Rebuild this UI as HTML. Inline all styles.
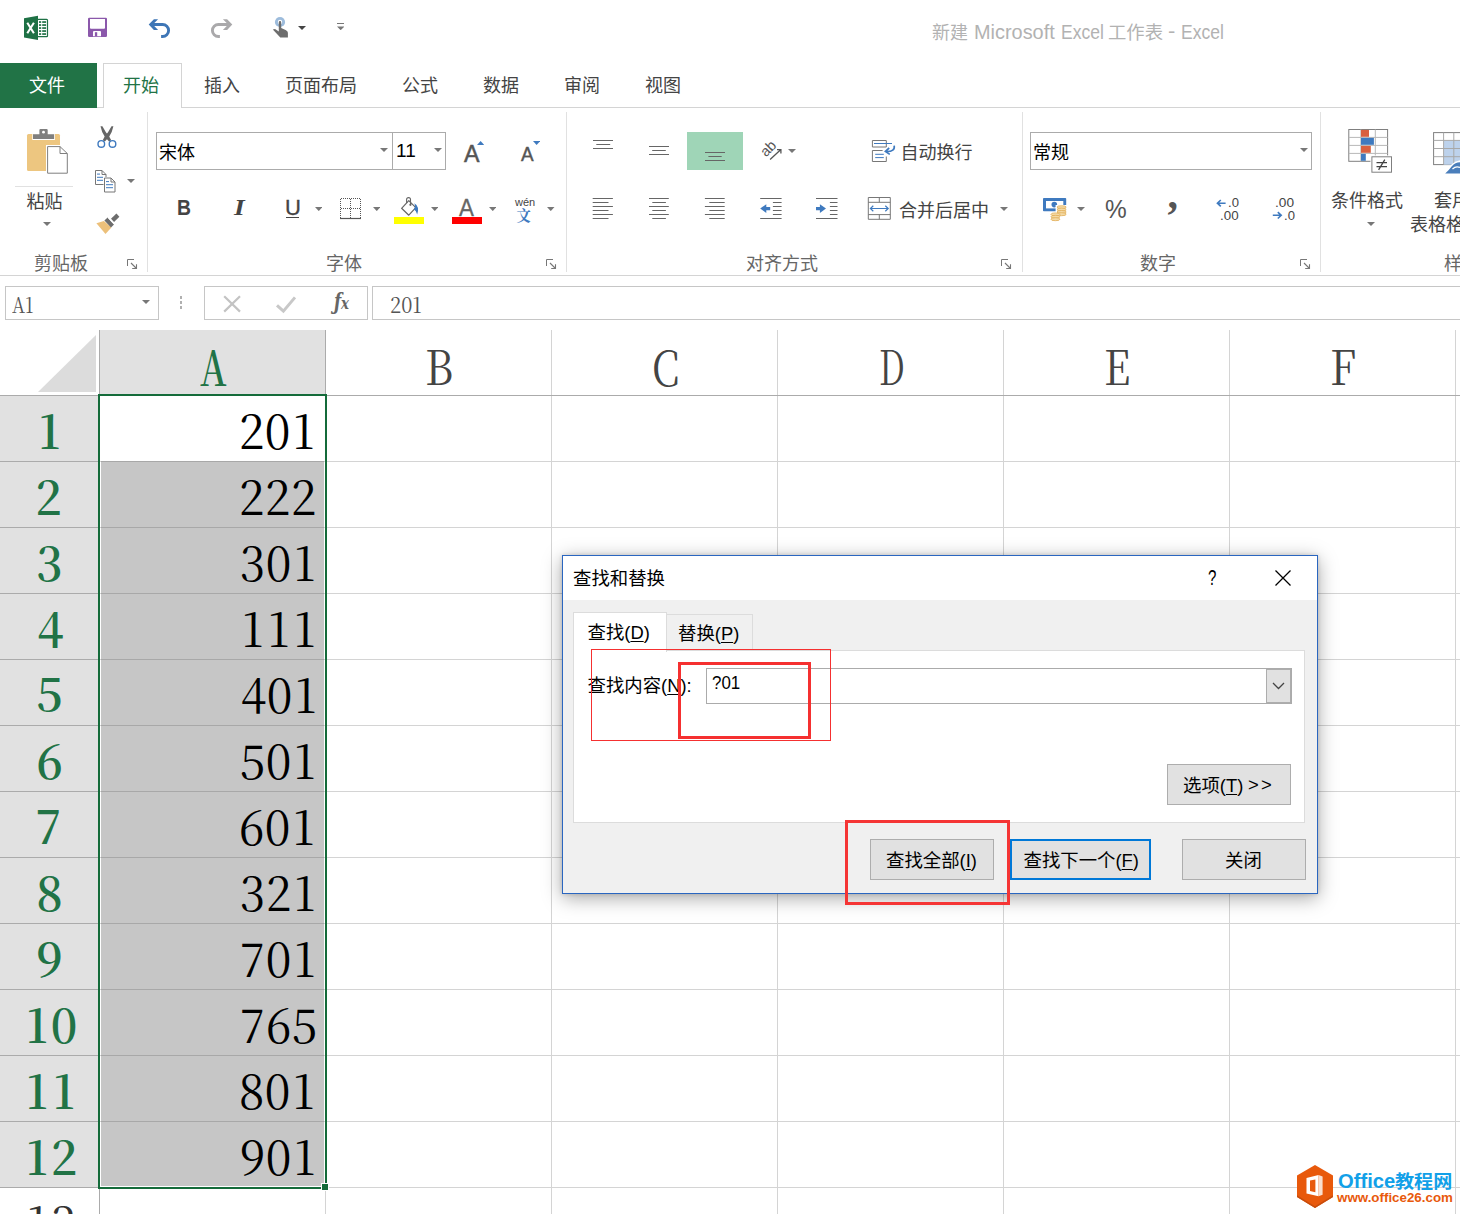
<!DOCTYPE html>
<html lang="zh-CN"><head><meta charset="utf-8"><title>Excel</title>
<style>
html,body{margin:0;padding:0;}
body{width:1460px;height:1214px;overflow:hidden;background:#fff;position:relative;font-family:"Liberation Sans","Noto Sans CJK SC",sans-serif;}
.b{position:absolute;box-sizing:border-box;}
.t{position:absolute;white-space:nowrap;line-height:1;transform-origin:0 0;}
.d{display:inline-block;width:26px;text-align:center;}.e{display:inline-block;width:27px;text-align:center;}u{text-decoration-thickness:1px;text-underline-offset:2px;}
</style></head>
<body>
<div class="t" style="left:932px;top:24.4px;color:#b2b2b2;font-family:'Liberation Sans','Noto Sans CJK SC',sans-serif;font-size:18px;">新建</div>
<div class="t" style="left:974px;top:21.9px;color:#b2b2b2;font-family:'Liberation Sans','Noto Sans CJK SC',sans-serif;font-size:20px;transform:scaleX(0.9950);">Microsoft</div>
<div class="t" style="left:1060.5px;top:21.9px;color:#b2b2b2;font-family:'Liberation Sans','Noto Sans CJK SC',sans-serif;font-size:20px;transform:scaleX(0.8766);">Excel</div>
<div class="t" style="left:1108px;top:24.4px;color:#b2b2b2;font-family:'Liberation Sans','Noto Sans CJK SC',sans-serif;font-size:18px;transform:scaleX(1.0192);">工作表</div>
<div class="t" style="left:1167.5px;top:21.4px;color:#b2b2b2;font-family:'Liberation Sans','Noto Sans CJK SC',sans-serif;font-size:20px;transform:scaleX(1.1000);">-</div>
<div class="t" style="left:1181px;top:21.9px;color:#b2b2b2;font-family:'Liberation Sans','Noto Sans CJK SC',sans-serif;font-size:20px;transform:scaleX(0.8766);">Excel</div>
<div class="b" style="left:0px;top:107px;width:1460px;height:1px;background:#d4d4d4;"></div>
<div class="b" style="left:0px;top:63px;width:97px;height:45px;background:#217346;"></div>
<div class="t" style="left:29px;top:77px;color:#fff;font-family:'Liberation Sans','Noto Sans CJK SC',sans-serif;font-size:18px;">文件</div>
<div class="b" style="left:103px;top:63px;width:79px;height:45px;background:#fff;border:1px solid #d4d4d4;border-bottom:none;"></div>
<div class="t" style="left:123px;top:77px;color:#217346;font-family:'Liberation Sans','Noto Sans CJK SC',sans-serif;font-size:18px;">开始</div>
<div class="t" style="left:204px;top:77px;color:#444;font-family:'Liberation Sans','Noto Sans CJK SC',sans-serif;font-size:18px;">插入</div>
<div class="t" style="left:285px;top:77px;color:#444;font-family:'Liberation Sans','Noto Sans CJK SC',sans-serif;font-size:18px;">页面布局</div>
<div class="t" style="left:402px;top:77px;color:#444;font-family:'Liberation Sans','Noto Sans CJK SC',sans-serif;font-size:18px;">公式</div>
<div class="t" style="left:483px;top:77px;color:#444;font-family:'Liberation Sans','Noto Sans CJK SC',sans-serif;font-size:18px;">数据</div>
<div class="t" style="left:564px;top:77px;color:#444;font-family:'Liberation Sans','Noto Sans CJK SC',sans-serif;font-size:18px;">审阅</div>
<div class="t" style="left:645px;top:77px;color:#444;font-family:'Liberation Sans','Noto Sans CJK SC',sans-serif;font-size:18px;">视图</div>
<div class="b" style="left:0px;top:275px;width:1460px;height:1px;background:#d4d4d4;"></div>
<div class="b" style="left:147px;top:112px;width:1px;height:160px;background:#e1e1e1;"></div>
<div class="b" style="left:566px;top:112px;width:1px;height:160px;background:#e1e1e1;"></div>
<div class="b" style="left:1022px;top:112px;width:1px;height:160px;background:#e1e1e1;"></div>
<div class="b" style="left:1320px;top:112px;width:1px;height:160px;background:#e1e1e1;"></div>
<div class="t" style="left:34px;top:255px;color:#666;font-family:'Liberation Sans','Noto Sans CJK SC',sans-serif;font-size:18px;">剪贴板</div>
<div class="t" style="left:326px;top:255px;color:#666;font-family:'Liberation Sans','Noto Sans CJK SC',sans-serif;font-size:18px;">字体</div>
<div class="t" style="left:746px;top:255px;color:#666;font-family:'Liberation Sans','Noto Sans CJK SC',sans-serif;font-size:18px;">对齐方式</div>
<div class="t" style="left:1140px;top:255px;color:#666;font-family:'Liberation Sans','Noto Sans CJK SC',sans-serif;font-size:18px;">数字</div>
<div class="t" style="left:1444px;top:255px;color:#666;font-family:'Liberation Sans','Noto Sans CJK SC',sans-serif;font-size:18px;">样式</div>
<div class="b" style="left:15px;top:186px;width:58px;height:1px;background:#e1e1e1;"></div>
<div class="t" style="left:26.5px;top:192.8px;color:#444;font-family:'Liberation Sans','Noto Sans CJK SC',sans-serif;font-size:18px;">粘贴</div>
<svg class="b" style="left:43px;top:222px;" width="8" height="4" viewBox="0 0 8 4"><path d="M0 0H8L4.0 4Z" fill="#777"/></svg>
<svg class="b" style="left:127px;top:179px;" width="8" height="4" viewBox="0 0 8 4"><path d="M0 0H8L4.0 4Z" fill="#777"/></svg>
<div class="b" style="left:156px;top:132px;width:237px;height:38px;background:#fff;border:1px solid #ababab;"></div>
<div class="b" style="left:392px;top:132px;width:54px;height:38px;background:#fff;border:1px solid #ababab;"></div>
<div class="t" style="left:159px;top:144px;color:#000;font-family:'Liberation Sans','Noto Sans CJK SC',sans-serif;font-size:18px;">宋体</div>
<svg class="b" style="left:380px;top:148px;" width="8" height="4" viewBox="0 0 8 4"><path d="M0 0H8L4.0 4Z" fill="#777"/></svg>
<div class="t" style="left:396px;top:141px;color:#000;font-family:'Liberation Sans','Noto Sans CJK SC',sans-serif;font-size:19px;">11</div>
<svg class="b" style="left:434px;top:148px;" width="8" height="4" viewBox="0 0 8 4"><path d="M0 0H8L4.0 4Z" fill="#777"/></svg>
<div class="t" style="left:464px;top:142.5px;color:#555;font-family:'Liberation Sans','Noto Sans CJK SC',sans-serif;font-size:23.5px;-webkit-text-stroke:0.5px #555;transform:scaleX(0.9875);">A</div>
<div class="t" style="left:521px;top:145px;color:#555;font-family:'Liberation Sans','Noto Sans CJK SC',sans-serif;font-size:19.5px;-webkit-text-stroke:0.4px #555;transform:scaleX(0.9692);">A</div>
<div class="t" style="left:177px;top:197px;color:#444;font-family:'Liberation Sans','Noto Sans CJK SC',sans-serif;font-size:22px;font-weight:700;transform:scaleX(0.8786);">B</div>
<div class="t" style="left:233.5px;top:196px;color:#444;font-family:'Liberation Serif','Noto Serif CJK SC',serif;font-size:23.5px;font-weight:700;font-style:italic;transform:scaleX(1.1700);">I</div>
<div class="t" style="left:285px;top:198px;color:#444;font-family:'Liberation Sans','Noto Sans CJK SC',sans-serif;font-size:21.5px;-webkit-text-stroke:0.3px #444;transform:scaleX(1.0231);">U</div>
<div class="b" style="left:285.8px;top:216.8px;width:13.3px;height:1.3px;background:#444;"></div>
<svg class="b" style="left:314.6px;top:207px;" width="7.5" height="4.1" viewBox="0 0 7.5 4.1"><path d="M0 0H7.5L3.75 4.1Z" fill="#777"/></svg>
<svg class="b" style="left:372.7px;top:207px;" width="7.5" height="4.1" viewBox="0 0 7.5 4.1"><path d="M0 0H7.5L3.75 4.1Z" fill="#777"/></svg>
<svg class="b" style="left:430.7px;top:207px;" width="7.5" height="4.1" viewBox="0 0 7.5 4.1"><path d="M0 0H7.5L3.75 4.1Z" fill="#777"/></svg>
<svg class="b" style="left:488.7px;top:207px;" width="7.5" height="4.1" viewBox="0 0 7.5 4.1"><path d="M0 0H7.5L3.75 4.1Z" fill="#777"/></svg>
<svg class="b" style="left:547px;top:207px;" width="7.5" height="4.1" viewBox="0 0 7.5 4.1"><path d="M0 0H7.5L3.75 4.1Z" fill="#777"/></svg>
<div class="b" style="left:394px;top:217px;width:30px;height:7px;background:#ffff00;"></div>
<div class="b" style="left:452px;top:217px;width:30px;height:7px;background:#ff0000;"></div>
<div class="t" style="left:459px;top:197.2px;color:#666;font-family:'Liberation Sans','Noto Sans CJK SC',sans-serif;font-size:23.5px;-webkit-text-stroke:0.3px #666;transform:scaleX(0.9500);">A</div>
<div class="t" style="left:515px;top:197px;color:#444;font-family:'Liberation Sans','Noto Sans CJK SC',sans-serif;font-size:11px;">wén</div>
<div class="t" style="left:516.5px;top:207.6px;color:#3f7abf;font-family:'Noto Serif CJK SC','Liberation Serif',serif;font-size:14.5px;font-weight:700;">文</div>
<div class="b" style="left:687px;top:132px;width:56px;height:38px;background:#9fd5b7;"></div>
<div class="t" style="left:900.5px;top:143.5px;color:#444;font-family:'Liberation Sans','Noto Sans CJK SC',sans-serif;font-size:18px;">自动换行</div>
<div class="t" style="left:899px;top:201.5px;color:#444;font-family:'Liberation Sans','Noto Sans CJK SC',sans-serif;font-size:18px;">合并后居中</div>
<svg class="b" style="left:788px;top:149px;" width="8" height="4" viewBox="0 0 8 4"><path d="M0 0H8L4.0 4Z" fill="#777"/></svg>
<svg class="b" style="left:1000px;top:207px;" width="8" height="4" viewBox="0 0 8 4"><path d="M0 0H8L4.0 4Z" fill="#777"/></svg>
<div class="b" style="left:1030px;top:132px;width:282px;height:38px;background:#fff;border:1px solid #ababab;"></div>
<div class="t" style="left:1033px;top:144px;color:#000;font-family:'Liberation Sans','Noto Sans CJK SC',sans-serif;font-size:18px;">常规</div>
<svg class="b" style="left:1300px;top:148px;" width="8" height="4" viewBox="0 0 8 4"><path d="M0 0H8L4.0 4Z" fill="#777"/></svg>
<svg class="b" style="left:1077px;top:207px;" width="8" height="4" viewBox="0 0 8 4"><path d="M0 0H8L4.0 4Z" fill="#777"/></svg>
<div class="t" style="left:1104.5px;top:197px;color:#555;font-family:'Liberation Sans','Noto Sans CJK SC',sans-serif;font-size:25px;transform:scaleX(0.9762);">%</div>
<div class="t" style="left:1331px;top:192px;color:#444;font-family:'Liberation Sans','Noto Sans CJK SC',sans-serif;font-size:18px;">条件格式</div>
<svg class="b" style="left:1367px;top:222px;" width="8" height="4" viewBox="0 0 8 4"><path d="M0 0H8L4.0 4Z" fill="#777"/></svg>
<div class="t" style="left:1434px;top:192px;color:#444;font-family:'Liberation Sans','Noto Sans CJK SC',sans-serif;font-size:18px;">套用</div>
<div class="t" style="left:1410px;top:216px;color:#444;font-family:'Liberation Sans','Noto Sans CJK SC',sans-serif;font-size:18px;">表格格式</div>
<div class="b" style="left:5px;top:286px;width:154px;height:34px;background:#fff;border:1px solid #c6c6c6;"></div>
<div class="b" style="left:204px;top:286px;width:164px;height:34px;background:#fff;border:1px solid #c6c6c6;"></div>
<div class="b" style="left:372px;top:286px;width:1100px;height:34px;background:#fff;border:1px solid #c6c6c6;"></div>
<div class="t" style="left:12px;top:293px;color:#555;font-family:'Noto Serif CJK SC','Liberation Serif',serif;font-size:22px;transform:scaleX(0.8200);">A1</div>
<svg class="b" style="left:142px;top:300px;" width="8" height="4" viewBox="0 0 8 4"><path d="M0 0H8L4.0 4Z" fill="#777"/></svg>
<div class="t" style="left:390px;top:293px;color:#555;font-family:'Noto Serif CJK SC','Liberation Serif',serif;font-size:22px;transform:scaleX(0.9091);">201</div>
<div class="b" style="left:180px;top:296px;width:2px;height:3px;background:#b0b0b0;"></div>
<div class="b" style="left:180px;top:301px;width:2px;height:3px;background:#b0b0b0;"></div>
<div class="b" style="left:180px;top:306px;width:2px;height:3px;background:#b0b0b0;"></div>
<div class="b" style="left:99px;top:330px;width:227px;height:65px;background:#e1e1e1;"></div>
<div class="b" style="left:0px;top:395px;width:1460px;height:1px;background:#ababab;"></div>
<div class="b" style="left:99px;top:330px;width:1px;height:64px;background:#ababab;"></div>
<svg class="b" style="left:38px;top:335px;" width="58" height="57" viewBox="0 0 58 57"><path d="M58 0V57H0Z" fill="#dcdcdc"/></svg>
<div class="b" style="left:325px;top:396px;width:1px;height:820px;background:#d4d4d4;"></div>
<div class="b" style="left:325px;top:330px;width:1px;height:65px;background:#ababab;"></div>
<div class="b" style="left:551px;top:396px;width:1px;height:820px;background:#d4d4d4;"></div>
<div class="b" style="left:551px;top:330px;width:1px;height:65px;background:#d4d4d4;"></div>
<div class="b" style="left:777px;top:396px;width:1px;height:820px;background:#d4d4d4;"></div>
<div class="b" style="left:777px;top:330px;width:1px;height:65px;background:#d4d4d4;"></div>
<div class="b" style="left:1003px;top:396px;width:1px;height:820px;background:#d4d4d4;"></div>
<div class="b" style="left:1003px;top:330px;width:1px;height:65px;background:#d4d4d4;"></div>
<div class="b" style="left:1229px;top:396px;width:1px;height:820px;background:#d4d4d4;"></div>
<div class="b" style="left:1229px;top:330px;width:1px;height:65px;background:#d4d4d4;"></div>
<div class="b" style="left:1455px;top:396px;width:1px;height:820px;background:#d4d4d4;"></div>
<div class="b" style="left:1455px;top:330px;width:1px;height:65px;background:#d4d4d4;"></div>
<div class="b" style="left:99px;top:1189px;width:1px;height:30px;background:#ababab;"></div>
<div class="b" style="left:0px;top:396px;width:98px;height:791px;background:#e1e1e1;"></div>
<div class="b" style="left:0px;top:461px;width:98px;height:1px;background:#ababab;"></div>
<div class="b" style="left:99px;top:461px;width:1361px;height:1px;background:#d4d4d4;"></div>
<div class="b" style="left:0px;top:527px;width:98px;height:1px;background:#ababab;"></div>
<div class="b" style="left:99px;top:527px;width:1361px;height:1px;background:#d4d4d4;"></div>
<div class="b" style="left:0px;top:593px;width:98px;height:1px;background:#ababab;"></div>
<div class="b" style="left:99px;top:593px;width:1361px;height:1px;background:#d4d4d4;"></div>
<div class="b" style="left:0px;top:659px;width:98px;height:1px;background:#ababab;"></div>
<div class="b" style="left:99px;top:659px;width:1361px;height:1px;background:#d4d4d4;"></div>
<div class="b" style="left:0px;top:725px;width:98px;height:1px;background:#ababab;"></div>
<div class="b" style="left:99px;top:725px;width:1361px;height:1px;background:#d4d4d4;"></div>
<div class="b" style="left:0px;top:791px;width:98px;height:1px;background:#ababab;"></div>
<div class="b" style="left:99px;top:791px;width:1361px;height:1px;background:#d4d4d4;"></div>
<div class="b" style="left:0px;top:857px;width:98px;height:1px;background:#ababab;"></div>
<div class="b" style="left:99px;top:857px;width:1361px;height:1px;background:#d4d4d4;"></div>
<div class="b" style="left:0px;top:923px;width:98px;height:1px;background:#ababab;"></div>
<div class="b" style="left:99px;top:923px;width:1361px;height:1px;background:#d4d4d4;"></div>
<div class="b" style="left:0px;top:989px;width:98px;height:1px;background:#ababab;"></div>
<div class="b" style="left:99px;top:989px;width:1361px;height:1px;background:#d4d4d4;"></div>
<div class="b" style="left:0px;top:1055px;width:98px;height:1px;background:#ababab;"></div>
<div class="b" style="left:99px;top:1055px;width:1361px;height:1px;background:#d4d4d4;"></div>
<div class="b" style="left:0px;top:1121px;width:98px;height:1px;background:#ababab;"></div>
<div class="b" style="left:99px;top:1121px;width:1361px;height:1px;background:#d4d4d4;"></div>
<div class="b" style="left:0px;top:1187px;width:98px;height:1px;background:#ababab;"></div>
<div class="b" style="left:99px;top:1187px;width:1361px;height:1px;background:#d4d4d4;"></div>
<div class="b" style="left:0px;top:1253px;width:98px;height:1px;background:#ababab;"></div>
<div class="b" style="left:99px;top:1253px;width:1361px;height:1px;background:#d4d4d4;"></div>
<div class="b" style="left:101px;top:462px;width:223px;height:724px;background:#c6c6c6;"></div>
<div class="b" style="left:101px;top:527px;width:223px;height:1px;background:#a8a8a8;"></div>
<div class="b" style="left:101px;top:593px;width:223px;height:1px;background:#a8a8a8;"></div>
<div class="b" style="left:101px;top:659px;width:223px;height:1px;background:#a8a8a8;"></div>
<div class="b" style="left:101px;top:725px;width:223px;height:1px;background:#a8a8a8;"></div>
<div class="b" style="left:101px;top:791px;width:223px;height:1px;background:#a8a8a8;"></div>
<div class="b" style="left:101px;top:857px;width:223px;height:1px;background:#a8a8a8;"></div>
<div class="b" style="left:101px;top:923px;width:223px;height:1px;background:#a8a8a8;"></div>
<div class="b" style="left:101px;top:989px;width:223px;height:1px;background:#a8a8a8;"></div>
<div class="b" style="left:101px;top:1055px;width:223px;height:1px;background:#a8a8a8;"></div>
<div class="b" style="left:101px;top:1121px;width:223px;height:1px;background:#a8a8a8;"></div>
<div class="b" style="left:101px;top:1187px;width:223px;height:1px;background:#a8a8a8;"></div>
<div class="b" style="left:101px;top:461px;width:223px;height:1px;background:#a8a8a8;"></div>
<div class="b" style="left:98px;top:394px;width:229px;height:2px;background:#146b3a;"></div>
<div class="b" style="left:98px;top:394px;width:2px;height:795px;background:#146b3a;"></div>
<div class="b" style="left:325px;top:394px;width:2px;height:789px;background:#146b3a;"></div>
<div class="b" style="left:98px;top:1187px;width:223px;height:2px;background:#146b3a;"></div>
<div class="b" style="left:321px;top:1183px;width:8px;height:8px;background:#fff;"></div>
<div class="b" style="left:322px;top:1184px;width:6px;height:6px;background:#146b3a;"></div>
<div class="t" style="left:200px;top:341.7px;color:#217346;font-family:'Noto Serif CJK SC','Liberation Serif',serif;font-size:48px;font-weight:600;transform:scaleX(0.7543);">A</div>
<div class="t" style="left:425px;top:340.5px;color:#444;font-family:'Noto Serif CJK SC','Liberation Serif',serif;font-size:48px;transform:scaleX(0.8786);">B</div>
<div class="t" style="left:651.5px;top:341.5px;color:#444;font-family:'Noto Serif CJK SC','Liberation Serif',serif;font-size:48px;transform:scaleX(0.8241);">C</div>
<div class="t" style="left:878.5px;top:340.5px;color:#444;font-family:'Noto Serif CJK SC','Liberation Serif',serif;font-size:48px;transform:scaleX(0.6970);">D</div>
<div class="t" style="left:1103.5px;top:340.5px;color:#444;font-family:'Noto Serif CJK SC','Liberation Serif',serif;font-size:48px;transform:scaleX(0.8429);">E</div>
<div class="t" style="left:1330px;top:340.5px;color:#444;font-family:'Noto Serif CJK SC','Liberation Serif',serif;font-size:48px;transform:scaleX(0.8667);">F</div>
<div class="t" style="left:238.5px;top:405.9px;color:#000;font-family:'Noto Serif CJK SC','Liberation Serif',serif;font-size:46px;"><span class="d">2</span><span class="d">0</span><span class="d">1</span></div>
<div class="t" style="left:36px;top:406.4px;color:#217346;font-family:'Noto Serif CJK SC','Liberation Serif',serif;font-size:46px;font-weight:600;"><span class="e">1</span></div>
<div class="t" style="left:238.5px;top:471.9px;color:#000;font-family:'Noto Serif CJK SC','Liberation Serif',serif;font-size:46px;"><span class="d">2</span><span class="d">2</span><span class="d">2</span></div>
<div class="t" style="left:35px;top:472.4px;color:#217346;font-family:'Noto Serif CJK SC','Liberation Serif',serif;font-size:46px;font-weight:600;"><span class="e">2</span></div>
<div class="t" style="left:239.5px;top:537.9px;color:#000;font-family:'Noto Serif CJK SC','Liberation Serif',serif;font-size:46px;"><span class="d">3</span><span class="d">0</span><span class="d">1</span></div>
<div class="t" style="left:36px;top:538.4px;color:#217346;font-family:'Noto Serif CJK SC','Liberation Serif',serif;font-size:46px;font-weight:600;"><span class="e">3</span></div>
<div class="t" style="left:239.5px;top:603.9px;color:#000;font-family:'Noto Serif CJK SC','Liberation Serif',serif;font-size:46px;"><span class="d">1</span><span class="d">1</span><span class="d">1</span></div>
<div class="t" style="left:37px;top:604.4px;color:#217346;font-family:'Noto Serif CJK SC','Liberation Serif',serif;font-size:46px;font-weight:600;"><span class="e">4</span></div>
<div class="t" style="left:240.5px;top:669.9px;color:#000;font-family:'Noto Serif CJK SC','Liberation Serif',serif;font-size:46px;"><span class="d">4</span><span class="d">0</span><span class="d">1</span></div>
<div class="t" style="left:36px;top:668.4px;color:#217346;font-family:'Noto Serif CJK SC','Liberation Serif',serif;font-size:46px;font-weight:600;"><span class="e">5</span></div>
<div class="t" style="left:239.5px;top:735.9px;color:#000;font-family:'Noto Serif CJK SC','Liberation Serif',serif;font-size:46px;"><span class="d">5</span><span class="d">0</span><span class="d">1</span></div>
<div class="t" style="left:36px;top:736.4px;color:#217346;font-family:'Noto Serif CJK SC','Liberation Serif',serif;font-size:46px;font-weight:600;"><span class="e">6</span></div>
<div class="t" style="left:238.5px;top:801.9px;color:#000;font-family:'Noto Serif CJK SC','Liberation Serif',serif;font-size:46px;"><span class="d">6</span><span class="d">0</span><span class="d">1</span></div>
<div class="t" style="left:35px;top:801.4px;color:#217346;font-family:'Noto Serif CJK SC','Liberation Serif',serif;font-size:46px;font-weight:600;"><span class="e">7</span></div>
<div class="t" style="left:239.5px;top:867.9px;color:#000;font-family:'Noto Serif CJK SC','Liberation Serif',serif;font-size:46px;"><span class="d">3</span><span class="d">2</span><span class="d">1</span></div>
<div class="t" style="left:36px;top:868.4px;color:#217346;font-family:'Noto Serif CJK SC','Liberation Serif',serif;font-size:46px;font-weight:600;"><span class="e">8</span></div>
<div class="t" style="left:239.5px;top:933.9px;color:#000;font-family:'Noto Serif CJK SC','Liberation Serif',serif;font-size:46px;"><span class="d">7</span><span class="d">0</span><span class="d">1</span></div>
<div class="t" style="left:36px;top:934.4px;color:#217346;font-family:'Noto Serif CJK SC','Liberation Serif',serif;font-size:46px;font-weight:600;"><span class="e">9</span></div>
<div class="t" style="left:239.5px;top:999.9px;color:#000;font-family:'Noto Serif CJK SC','Liberation Serif',serif;font-size:46px;"><span class="d">7</span><span class="d">6</span><span class="d">5</span></div>
<div class="t" style="left:23.5px;top:1000.4px;color:#217346;font-family:'Noto Serif CJK SC','Liberation Serif',serif;font-size:46px;font-weight:600;"><span class="e">1</span><span class="e">0</span></div>
<div class="t" style="left:238.5px;top:1065.9px;color:#000;font-family:'Noto Serif CJK SC','Liberation Serif',serif;font-size:46px;"><span class="d">8</span><span class="d">0</span><span class="d">1</span></div>
<div class="t" style="left:23.5px;top:1066.4px;color:#217346;font-family:'Noto Serif CJK SC','Liberation Serif',serif;font-size:46px;font-weight:600;"><span class="e">1</span><span class="e">1</span></div>
<div class="t" style="left:239.5px;top:1131.9px;color:#000;font-family:'Noto Serif CJK SC','Liberation Serif',serif;font-size:46px;"><span class="d">9</span><span class="d">0</span><span class="d">1</span></div>
<div class="t" style="left:23.5px;top:1132.4px;color:#217346;font-family:'Noto Serif CJK SC','Liberation Serif',serif;font-size:46px;font-weight:600;"><span class="e">1</span><span class="e">2</span></div>
<div class="t" style="left:24.5px;top:1198.4px;color:#333;font-family:'Noto Serif CJK SC','Liberation Serif',serif;font-size:46px;"><span class="d">1</span><span class="d">3</span></div>
<div class="b" style="left:562px;top:555px;width:756px;height:339px;background:#f0f0f0;border:1px solid #2a66c0;box-shadow:0 4px 18px rgba(0,0,0,.35),0 0 4px rgba(0,0,0,.15);"></div>
<div class="b" style="left:563px;top:556px;width:754px;height:44px;background:#fff;"></div>
<div class="t" style="left:573px;top:570.3px;color:#000;font-family:'Liberation Sans','Noto Sans CJK SC',sans-serif;font-size:18.4px;">查找和替换</div>
<div class="t" style="left:1208px;top:567.6px;color:#000;font-family:'Liberation Sans','Noto Sans CJK SC',sans-serif;font-size:21.5px;transform:scaleX(0.7000);">?</div>
<svg class="b" style="left:1275px;top:570px;" width="16" height="16" viewBox="0 0 16 16"><path d="M0.5 0.5L15.5 15.5M15.5 0.5L0.5 15.5" stroke="#000" stroke-width="1.3" fill="none"/></svg>
<div class="b" style="left:573px;top:650px;width:732px;height:173px;background:#fff;border:1px solid #dcdcdc;"></div>
<div class="b" style="left:666px;top:614px;width:87px;height:37px;background:#f0f0f0;border:1px solid #dcdcdc;"></div>
<div class="b" style="left:573px;top:612px;width:94px;height:40px;background:#fff;border:1px solid #dcdcdc;border-bottom:none;"></div>
<div class="t" style="left:587.5px;top:624.3px;color:#000;font-family:'Liberation Sans','Noto Sans CJK SC',sans-serif;font-size:18.4px;">查找(<u>D</u>)</div>
<div class="t" style="left:678px;top:624.8px;color:#000;font-family:'Liberation Sans','Noto Sans CJK SC',sans-serif;font-size:18.4px;">替换(<u>P</u>)</div>
<div class="t" style="left:587.5px;top:677px;color:#000;font-family:'Liberation Sans','Noto Sans CJK SC',sans-serif;font-size:18.4px;">查找内容(<u>N</u>):</div>
<div class="b" style="left:706px;top:668px;width:586px;height:36px;background:#fff;border:1px solid #ababab;"></div>
<div class="t" style="left:711.5px;top:673.2px;color:#000;font-family:'Liberation Sans','Noto Sans CJK SC',sans-serif;font-size:19px;transform:scaleX(0.8900);">?01</div>
<div class="b" style="left:1266px;top:669px;width:25px;height:34px;background:#e1e1e1;border:1px solid #adadad;"></div>
<svg class="b" style="left:1272px;top:682px;" width="13" height="8" viewBox="0 0 13 8"><path d="M1 1L6.5 6.5L12 1" stroke="#444" stroke-width="1.3" fill="none"/></svg>
<div class="b" style="left:1167px;top:764px;width:124px;height:41px;background:#e1e1e1;border:1px solid #adadad;"></div>
<div class="t" style="left:1183px;top:777px;color:#000;font-family:'Liberation Sans','Noto Sans CJK SC',sans-serif;font-size:18.4px;">选项(<u>T</u>)</div>
<div class="t" style="left:1248px;top:776.2px;color:#000;font-family:'Liberation Sans','Noto Sans CJK SC',sans-serif;font-size:18.4px;transform:scaleX(1.0000);">&gt;</div>
<div class="t" style="left:1261px;top:776.2px;color:#000;font-family:'Liberation Sans','Noto Sans CJK SC',sans-serif;font-size:18.4px;transform:scaleX(1.0000);">&gt;</div>
<div class="b" style="left:870px;top:839px;width:124px;height:41px;background:#e1e1e1;border:1px solid #adadad;"></div>
<div class="t" style="left:886px;top:851.7px;color:#000;font-family:'Liberation Sans','Noto Sans CJK SC',sans-serif;font-size:18.4px;">查找全部(<u>I</u>)</div>
<div class="b" style="left:1010px;top:839px;width:141px;height:41px;background:#e1e1e1;border:2px solid #0078d7;"></div>
<div class="t" style="left:1023.5px;top:851.7px;color:#000;font-family:'Liberation Sans','Noto Sans CJK SC',sans-serif;font-size:18.4px;">查找下一个(<u>F</u>)</div>
<div class="b" style="left:1182px;top:839px;width:124px;height:41px;background:#e1e1e1;border:1px solid #adadad;"></div>
<div class="t" style="left:1225px;top:852px;color:#000;font-family:'Liberation Sans','Noto Sans CJK SC',sans-serif;font-size:18.4px;">关闭</div>
<div class="b" style="left:591px;top:649px;width:239.5px;height:92px;border:1px solid #f53030;"></div>
<div class="b" style="left:678px;top:662px;width:133px;height:76.6px;border:3px solid #f53030;"></div>
<div class="b" style="left:845px;top:820px;width:165px;height:85px;border:3px solid #f53535;"></div>
<svg class="b" style="left:1297px;top:1165px;" width="36" height="43" viewBox="0 0 36 43"><path d="M18 0L36 10.5V32L18 43L0 32V10.5Z" fill="#e8590c"/><path d="M0 30.2L18 41.2L36 30.2V32L18 43L0 32Z" fill="#c84d0c"/><path d="M9.5 13L21.5 10V31.2L9.5 28.4Z" fill="#fff"/><path d="M13 15.6L18.4 14.4V27.2L13 26Z" fill="#e8590c"/><path d="M21.5 10L25.6 11.6V29.8L21.5 31.2Z" fill="#f9dfd0"/></svg>
<div class="t" style="left:1337.5px;top:1170.5px;color:#12a0e8;font-family:'Liberation Sans','Noto Sans CJK SC',sans-serif;font-size:20px;font-weight:700;transform:scaleX(1.0091);">Office</div>
<div class="t" style="left:1394.5px;top:1172.5px;color:#12a0e8;font-family:'Liberation Sans','Noto Sans CJK SC',sans-serif;font-size:18px;font-weight:700;transform:scaleX(1.0604);">教程网</div>
<div class="t" style="left:1337px;top:1190.5px;color:#e8590c;font-family:'Liberation Sans','Noto Sans CJK SC',sans-serif;font-size:13px;font-weight:700;transform:scaleX(1.0265);">www.office26.com</div>
<svg class="b" style="left:22px;top:14px;" width="28" height="28" viewBox="22 14 28 28"><path d="M24 18.2L38 15.8V40L24 37.6Z" fill="#1e7145"/><rect x="37.4" y="19.4" width="10.1" height="17.2" rx="0.9" fill="#fff" stroke="#1e7145" stroke-width="1.2"/><rect x="39" y="21.2" width="2.2" height="1.7" fill="#1e7145"/><rect x="42.2" y="21.2" width="3.9" height="1.7" fill="#1e7145"/><rect x="39" y="24.2" width="2.2" height="1.7" fill="#1e7145"/><rect x="42.2" y="24.2" width="3.9" height="1.7" fill="#1e7145"/><rect x="39" y="27.2" width="2.2" height="1.7" fill="#1e7145"/><rect x="42.2" y="27.2" width="3.9" height="1.7" fill="#1e7145"/><rect x="39" y="30.2" width="2.2" height="1.7" fill="#1e7145"/><rect x="42.2" y="30.2" width="3.9" height="1.7" fill="#1e7145"/><rect x="39" y="33.2" width="2.2" height="1.7" fill="#1e7145"/><rect x="42.2" y="33.2" width="3.9" height="1.7" fill="#1e7145"/><path d="M27.3 22.8L33.9 33.2M33.9 22.8L27.3 33.2" stroke="#fff" stroke-width="2.1" fill="none"/></svg>
<svg class="b" style="left:86px;top:16px;" width="24" height="24" viewBox="86 16 24 24"><rect x="88" y="17.8" width="19" height="19.2" rx="1.2" fill="#8b58ab"/><path d="M90 18.9H105V27.7Q105 28.7 104 28.7H91Q90 28.7 90 27.7Z" fill="#fff"/><path d="M93 36.3V32Q93 31 94 31H100Q101 31 101 32V36.3Z" fill="#fff"/><rect x="94.9" y="32.2" width="2.3" height="4.1" fill="#8b58ab"/></svg>
<svg class="b" style="left:146px;top:16px;" width="28" height="26" viewBox="146 16 28 26"><path d="M148.7 24.5L153.9 19.2H158.1L152.8 24.5L158.1 29.9H153.9Z" fill="#3e76b6"/><path d="M152.5 24.5H162.6A6 6 0 0 1 162.6 36.5H161.1" stroke="#3e76b6" stroke-width="2.9" fill="none"/></svg>
<svg class="b" style="left:207px;top:16px;" width="28" height="26" viewBox="207 16 28 26"><path d="M232.3 24.5L227.1 19.2H222.9L228.2 24.5L222.9 29.9H227.1Z" fill="#aaa9ab"/><path d="M228.5 24.5H218.4A6 6 0 0 0 218.4 36.5H219.9" stroke="#aaa9ab" stroke-width="2.9" fill="none"/></svg>
<svg class="b" style="left:270px;top:14px;" width="22" height="26" viewBox="270 14 22 26"><circle cx="280" cy="22" r="5.1" fill="#9dbcdc"/><circle cx="280" cy="22" r="2.2" fill="#fff"/><path d="M272.8 29.6L275 29.1L278.8 31.6V22.3Q278.8 21.1 280 21.1Q281.2 21.1 281.2 22.3V28L285.6 29.9Q287.9 31 287.9 32.8V37.5H280.3Z" fill="#6d6d6d"/></svg>
<svg class="b" style="left:297.5px;top:26px;" width="8" height="4" viewBox="0 0 8 4"><path d="M0 0H8L4 4Z" fill="#444"/></svg>
<svg class="b" style="left:337px;top:23px;" width="7.4" height="7.2" viewBox="0 0 7.4 7.2"><path d="M0 0H7.4V1H0ZM0 3.5H7.4L3.7 7.2Z" fill="#777"/></svg>
<svg class="b" style="left:25px;top:127px;" width="46" height="50" viewBox="25 127 46 50"><rect x="27" y="134.1" width="33" height="36.8" rx="1.5" fill="#edc680"/><path d="M32.3 134.1H54.9V140H32.3Z" fill="#fff"/><path d="M33 134.3H39.4V130Q39.4 128.9 40.5 128.9H46.6Q47.7 128.9 47.7 130V134.3H54.1V139.1H33Z" fill="#7f7f7f"/><circle cx="43.5" cy="132.2" r="1.4" fill="#fff"/><rect x="46" y="145" width="23" height="30" fill="#fff"/><path d="M47.6 146.6H60L67.3 153.5V173.2H47.6Z" fill="#fff" stroke="#7f7f7f" stroke-width="1"/><path d="M60 146.6V153.5H67.3" fill="none" stroke="#7f7f7f" stroke-width="1"/></svg>
<svg class="b" style="left:96px;top:124px;" width="22" height="26" viewBox="96 124 22 26"><path d="M100.5 126.2L102.4 126.2Q105.4 132 109.2 136.6L111.2 140.2L109 141.4L104.8 136.8Q101.6 132 100.5 126.2Z" fill="#666"/><path d="M113.4 126.2L111.5 126.2Q108.5 132 104.7 136.6L102.7 140.2L104.9 141.4L109.1 136.8Q112.3 132 113.4 126.2Z" fill="#666"/><circle cx="101.3" cy="143.9" r="3.3" fill="#fff" stroke="#3f7abf" stroke-width="1.4"/><circle cx="112.5" cy="143.9" r="3.3" fill="#fff" stroke="#3f7abf" stroke-width="1.4"/></svg>
<svg class="b" style="left:94px;top:169px;" width="24" height="25" viewBox="94 169 24 25"><path d="M95.5 170.5H102.0L106.0 174.5V184.5H95.5Z" fill="#fff" stroke="#777" stroke-width="1"/><path d="M102.0 170.5V174.5H106.0" fill="none" stroke="#777" stroke-width="1"/><path d="M97 174.1H100" stroke="#3f7abf" stroke-width="1"/><path d="M97 177.3H103" stroke="#3f7abf" stroke-width="1"/><path d="M97 180.3H103" stroke="#3f7abf" stroke-width="1"/><rect x="103.5" y="177" width="12.5" height="15.5" fill="#fff"/><path d="M104.5 178H111.0L115.0 182V192H104.5Z" fill="#fff" stroke="#777" stroke-width="1"/><path d="M111.0 178V182H115.0" fill="none" stroke="#777" stroke-width="1"/><path d="M106 181.6H109" stroke="#3f7abf" stroke-width="1"/><path d="M106 184.7H113" stroke="#3f7abf" stroke-width="1"/><path d="M106 187.7H113" stroke="#3f7abf" stroke-width="1"/></svg>
<svg class="b" style="left:95px;top:212px;" width="26" height="24" viewBox="95 212 26 24"><path d="M96.4 223.2L103.9 221L111.4 227.4L105.5 233.9Z" fill="#ecc07a"/><path d="M104.4 220.6L107.6 217.6L114 224.6L111 227.6Z" fill="#6d6d6d"/><path d="M106.6 219.8L107.8 218.7L113 224.6L111.9 225.7Z" fill="#fff" opacity="0.0"/><path d="M110.2 219.4L116.4 213.6L119.4 216.8L113.3 222.8Z" fill="#6d6d6d"/><path d="M107.9 217.9L109.2 216.7L115 223L113.7 224.3Z" fill="#fff"/></svg>
<svg class="b" style="left:477px;top:141px;" width="7.2" height="4" viewBox="0 0 7.2 4"><path d="M0 4H7.2L3.6 0Z" fill="#3f7abf"/></svg>
<svg class="b" style="left:533px;top:141px;" width="7.2" height="4" viewBox="0 0 7.2 4"><path d="M0 0H7.2L3.6 4Z" fill="#3f7abf"/></svg>
<svg class="b" style="left:339px;top:197px;" width="24" height="23" viewBox="339 197 24 23"><path d="M340.5 198.5H360.5M340.5 208.5H360.5M340.5 198.5V218M350.5 198.5V218M360.5 198.5V218" stroke="#555" stroke-width="1" stroke-dasharray="1 1" fill="none" shape-rendering="crispEdges"/><path d="M340 218.5H361" stroke="#555" stroke-width="1.2"/></svg>
<svg class="b" style="left:399px;top:196px;" width="22" height="21" viewBox="399 196 22 21"><path d="M408.8 200.6L401.6 208.3L408.8 215.2L415.8 207.6Z" fill="#fff" stroke="#666" stroke-width="1.2" stroke-linejoin="round"/><path d="M406.6 203V199.6Q406.6 197.6 408.6 197.6Q410.5 197.6 410.5 199.6V204.4" fill="none" stroke="#666" stroke-width="1.1"/><circle cx="410.4" cy="204.8" r="1.1" fill="#666"/><path d="M414.2 203.2Q419.8 206 417.2 214.6Q416.2 210.4 413.8 209.2Q416 206.5 414.2 203.2Z" fill="#3f7abf"/></svg>
<svg class="b" style="left:592px;top:139px;" width="23" height="12" viewBox="592 139 23 12"><path d="M593 140.5H613" stroke="#666" stroke-width="1"/><path d="M596.3 144.5H610.2" stroke="#666" stroke-width="1"/><path d="M593 148.5H613" stroke="#666" stroke-width="1"/></svg>
<svg class="b" style="left:648px;top:145px;" width="23" height="12" viewBox="648 145 23 12"><path d="M649 146.5H669" stroke="#666" stroke-width="1"/><path d="M652.2 150.5H665.8" stroke="#666" stroke-width="1"/><path d="M649 154.5H669" stroke="#666" stroke-width="1"/></svg>
<svg class="b" style="left:704px;top:151px;" width="23" height="12" viewBox="704 151 23 12"><path d="M705 152.5H725" stroke="#666" stroke-width="1"/><path d="M708.4 156.5H721.7" stroke="#666" stroke-width="1"/><path d="M705 160.5H725" stroke="#666" stroke-width="1"/></svg>
<svg class="b" style="left:592px;top:197px;" width="23" height="24" viewBox="592 197 23 24"><path d="M592.7 198.5H612.9" stroke="#666" stroke-width="1"/><path d="M592.7 202.5H608.5" stroke="#666" stroke-width="1"/><path d="M592.7 206.5H612.9" stroke="#666" stroke-width="1"/><path d="M592.7 210.5H608.5" stroke="#666" stroke-width="1"/><path d="M592.7 214.5H612.9" stroke="#666" stroke-width="1"/><path d="M592.7 218.5H608.5" stroke="#666" stroke-width="1"/></svg>
<svg class="b" style="left:648px;top:197px;" width="23" height="24" viewBox="648 197 23 24"><path d="M649 198.5H668.8" stroke="#666" stroke-width="1"/><path d="M652.3 202.5H665.9" stroke="#666" stroke-width="1"/><path d="M649 206.5H668.8" stroke="#666" stroke-width="1"/><path d="M652.3 210.5H665.9" stroke="#666" stroke-width="1"/><path d="M649 214.5H668.8" stroke="#666" stroke-width="1"/><path d="M652.3 218.5H665.9" stroke="#666" stroke-width="1"/></svg>
<svg class="b" style="left:704px;top:197px;" width="23" height="24" viewBox="704 197 23 24"><path d="M704.9 198.5H724.7" stroke="#666" stroke-width="1"/><path d="M709.3 202.5H724.7" stroke="#666" stroke-width="1"/><path d="M704.9 206.5H724.7" stroke="#666" stroke-width="1"/><path d="M709.3 210.5H724.7" stroke="#666" stroke-width="1"/><path d="M704.9 214.5H724.7" stroke="#666" stroke-width="1"/><path d="M709.3 218.5H724.7" stroke="#666" stroke-width="1"/></svg>
<svg class="b" style="left:759px;top:197px;" width="24" height="24" viewBox="759 197 24 24"><path d="M760.2 198.5H781.6" stroke="#666" stroke-width="1"/><path d="M760.2 218.5H781.6" stroke="#666" stroke-width="1"/><path d="M772.9 202.5H781.6" stroke="#666" stroke-width="1"/><path d="M772.9 206.5H781.6" stroke="#666" stroke-width="1"/><path d="M772.9 210.5H781.6" stroke="#666" stroke-width="1"/><path d="M772.9 214.5H781.6" stroke="#666" stroke-width="1"/><path d="M760.2 208.5L766.3 204.2V206.9H770.2V210.2H766.3V212.9Z" fill="#3f7abf"/></svg>
<svg class="b" style="left:815px;top:197px;" width="24" height="24" viewBox="815 197 24 24"><path d="M816 198.5H837.5" stroke="#666" stroke-width="1"/><path d="M816 218.5H837.5" stroke="#666" stroke-width="1"/><path d="M829.9 202.5H837.5" stroke="#666" stroke-width="1"/><path d="M829.9 206.5H837.5" stroke="#666" stroke-width="1"/><path d="M829.9 210.5H837.5" stroke="#666" stroke-width="1"/><path d="M829.9 214.5H837.5" stroke="#666" stroke-width="1"/><path d="M826 208.5L819.9 204.2V206.9H816V210.2H819.9V212.9Z" fill="#3f7abf"/></svg>
<svg class="b" style="left:867px;top:196px;" width="25" height="25" viewBox="867 196 25 25"><path d="M868.3 197.5H890.3V219.3H868.3Z" fill="#fff" stroke="#777" stroke-width="1"/><path d="M868.3 202.3H890.3M868.3 214.6H890.3M879.3 197.5V202.3M879.3 214.6V219.3" stroke="#777" stroke-width="1" fill="none"/><path d="M870.6 208.5H888M873.3 205.8L870.4 208.5L873.3 211.2M885.3 205.8L888.2 208.5L885.3 211.2" stroke="#3f7abf" stroke-width="1.2" fill="none"/></svg>
<svg class="b" style="left:760px;top:140px;" width="24" height="22" viewBox="760 140 24 22"><path d="M770.1 159.6L780.6 149.8M777 149.6H780.9V153.4" stroke="#555" stroke-width="1.3" fill="none"/><text x="765.9" y="157.6" font-family="Liberation Sans,sans-serif" font-size="14.5" fill="#555" transform="rotate(-45 765.9 157.6)">ab</text></svg>
<svg class="b" style="left:871px;top:139px;" width="26" height="24" viewBox="871 139 26 24"><path d="M872.4 140.5H886.3V147H872.4Z" fill="#fff" stroke="#777" stroke-width="1"/><path d="M882.6 150.5H872.4V161.5H886.3V156.5" fill="none" stroke="#777" stroke-width="1"/><path d="M874 143.5H892M875.2 154.3H883.8M875.2 157.6H883.8" stroke="#3f7abf" stroke-width="1"/><path d="M894.2 145.6Q895.2 151.8 886.4 151.5M889.2 148L885.4 151.4L889.8 154.4" stroke="#3f7abf" stroke-width="1.7" fill="none"/></svg>
<svg class="b" style="left:1041px;top:196px;" width="28" height="27" viewBox="1041 196 28 27"><rect x="1043" y="198" width="23.2" height="13.2" rx="0.8" fill="#3f7abf"/><rect x="1046" y="201" width="17.3" height="7.4" fill="#fff"/><circle cx="1054.3" cy="204.6" r="2.8" fill="#3f7abf"/><rect x="1055.6" y="205" width="11.5" height="10.5" fill="#fff"/><rect x="1049.8" y="212" width="11" height="9.2" fill="#fff"/><ellipse cx="1061.6" cy="207.2" rx="4.6" ry="1.5" fill="#f3d9a5" stroke="#e2ae58" stroke-width="0.8"/><ellipse cx="1061.6" cy="209.6" rx="4.6" ry="1.5" fill="#f3d9a5" stroke="#e2ae58" stroke-width="0.8"/><ellipse cx="1061.6" cy="212" rx="4.6" ry="1.5" fill="#f3d9a5" stroke="#e2ae58" stroke-width="0.8"/><ellipse cx="1061.6" cy="214.2" rx="4.6" ry="1.5" fill="#f3d9a5" stroke="#e2ae58" stroke-width="0.8"/><ellipse cx="1055.4" cy="214.4" rx="4.5" ry="1.5" fill="#f3d9a5" stroke="#e2ae58" stroke-width="0.8"/><ellipse cx="1055.4" cy="216.8" rx="4.5" ry="1.5" fill="#f3d9a5" stroke="#e2ae58" stroke-width="0.8"/><ellipse cx="1055.4" cy="219.2" rx="4.5" ry="1.5" fill="#f3d9a5" stroke="#e2ae58" stroke-width="0.8"/></svg>
<div class="t" style="left:1167.5px;top:173px;color:#555;font-family:'Liberation Serif','Noto Serif CJK SC',serif;font-size:42px;font-weight:700;">,</div>
<div class="t" style="left:1227.5px;top:197.2px;color:#444;font-family:'Liberation Sans','Noto Sans CJK SC',sans-serif;font-size:12px;transform:scaleX(1.0889);">.0</div>
<div class="t" style="left:1219.5px;top:209.5px;color:#444;font-family:'Liberation Sans','Noto Sans CJK SC',sans-serif;font-size:12px;transform:scaleX(1.1125);">.00</div>
<div class="t" style="left:1275px;top:197.2px;color:#444;font-family:'Liberation Sans','Noto Sans CJK SC',sans-serif;font-size:12px;transform:scaleX(1.1375);">.00</div>
<div class="t" style="left:1283.5px;top:209.5px;color:#444;font-family:'Liberation Sans','Noto Sans CJK SC',sans-serif;font-size:12px;transform:scaleX(1.0889);">.0</div>
<svg class="b" style="left:1216px;top:199px;" width="11" height="9" viewBox="1216 199 11 9"><path d="M1217.2 203.2H1225.6M1220.8 200L1217.4 203.2L1220.8 206.4" stroke="#3f7abf" stroke-width="1.6" fill="none"/></svg>
<svg class="b" style="left:1272px;top:211px;" width="11" height="9" viewBox="1272 211 11 9"><path d="M1272.8 215.3H1281.2M1277.8 212.1L1281.2 215.3L1277.8 218.5" stroke="#3f7abf" stroke-width="1.6" fill="none"/></svg>
<svg class="b" style="left:1347px;top:128px;" width="47" height="46" viewBox="1347 128 47 46"><rect x="1348.8" y="129.5" width="38.8" height="31.8" fill="#fff" stroke="#7f7f7f" stroke-width="1"/><path d="M1360.9 129.5V161.3M1375.3 129.5V161.3M1348.8 137.4H1387.6M1348.8 145.4H1387.6M1348.8 153.4H1387.6" stroke="#b8b8b8" stroke-width="1" fill="none"/><rect x="1361" y="129.9" width="8" height="6.9" fill="#d9603f"/><rect x="1361" y="137.9" width="12.9" height="6.9" fill="#3f7abf"/><rect x="1361" y="145.9" width="9.8" height="6.9" fill="#d9603f"/><rect x="1361" y="153.9" width="4.8" height="6.9" fill="#3f7abf"/><rect x="1370.5" y="155.4" width="22.5" height="18" fill="#fff"/><rect x="1371.9" y="156.8" width="19.6" height="15.4" fill="#fff" stroke="#7f7f7f" stroke-width="1"/><path d="M1376.5 162.6H1387M1376.5 166.6H1387M1384.8 159.6L1378.6 169.8" stroke="#444" stroke-width="1.3" fill="none"/></svg>
<svg class="b" style="left:1432px;top:131px;" width="28" height="45" viewBox="1432 131 28 45"><rect x="1433.6" y="132.6" width="40" height="32" fill="#fff" stroke="#7f7f7f" stroke-width="1"/><rect x="1444" y="140.7" width="30" height="24" fill="#bdd2ec"/><path d="M1443.6 132.6V164.6M1453.8 132.6V164.6M1433.6 140.4H1470M1433.6 148.5H1470M1433.6 156.7H1470" stroke="#a8a8a8" stroke-width="1" fill="none"/><path d="M1443 175L1452 164Q1456 160.5 1461 160V175Z" fill="#fff"/><path d="M1445.2 173.6Q1449 170 1451.8 166.2Q1455.5 162 1461 162.4V173.6Z" fill="#4a7ebb"/><path d="M1452.5 169Q1456 165.5 1460 167.5" stroke="#fff" stroke-width="1.2" fill="none"/></svg>
<svg class="b" style="left:127px;top:259px;" width="11" height="11" viewBox="127 259 11 11"><path d="M127.5 266V259.5H134" stroke="#777" stroke-width="1" fill="none"/><path d="M131 263L136 268M132.2 268.5H136.5V264.2" stroke="#777" stroke-width="1.1" fill="none"/></svg>
<svg class="b" style="left:546px;top:259px;" width="11" height="11" viewBox="546 259 11 11"><path d="M546.5 266V259.5H553" stroke="#777" stroke-width="1" fill="none"/><path d="M550 263L555 268M551.2 268.5H555.5V264.2" stroke="#777" stroke-width="1.1" fill="none"/></svg>
<svg class="b" style="left:1000.5px;top:259px;" width="11" height="11" viewBox="1000.5 259 11 11"><path d="M1001.0 266V259.5H1007.5" stroke="#777" stroke-width="1" fill="none"/><path d="M1004.5 263L1009.5 268M1005.7 268.5H1010.0V264.2" stroke="#777" stroke-width="1.1" fill="none"/></svg>
<svg class="b" style="left:1300px;top:259px;" width="11" height="11" viewBox="1300 259 11 11"><path d="M1300.5 266V259.5H1307" stroke="#777" stroke-width="1" fill="none"/><path d="M1304 263L1309 268M1305.2 268.5H1309.5V264.2" stroke="#777" stroke-width="1.1" fill="none"/></svg>
<svg class="b" style="left:222px;top:294px;" width="20" height="20" viewBox="222 294 20 20"><path d="M224.2 296.2L240 311.6M240 296.2L224.2 311.6" stroke="#c3c3c3" stroke-width="2.2" fill="none"/></svg>
<svg class="b" style="left:275px;top:294px;" width="22" height="20" viewBox="275 294 22 20"><path d="M277 305.4L283.4 311.2L295 297.4" stroke="#c8c8c8" stroke-width="3" fill="none"/></svg>
<div class="t" style="left:334px;top:290.4px;color:#666;font-family:'DejaVu Serif',serif;font-size:22px;font-weight:700;font-style:italic;transform:scaleX(0.7647);">ƒ</div>
<div class="t" style="left:341px;top:295.3px;color:#666;font-family:'DejaVu Serif',serif;font-size:17px;font-weight:700;font-style:italic;transform:scaleX(0.7800);">x</div>
</body></html>
